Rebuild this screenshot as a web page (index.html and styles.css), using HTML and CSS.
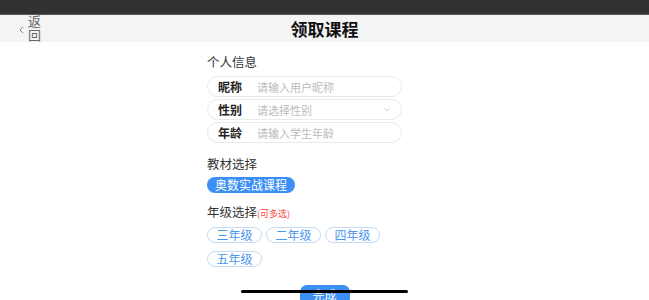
FILE: index.html
```html
<!DOCTYPE html>
<html lang="zh">
<head>
<meta charset="utf-8">
<link rel="stylesheet" href="styles.css">
</head>
<body>
<div class="status"></div>
<header class="nav">
  <div class="back">
    <svg class="chev" width="5" height="8" viewBox="0 0 5 8"><path d="M4 0.8 L1 4 L4 7.2" fill="none" stroke="#777" stroke-width="0.9"/></svg>
    <span class="back-text">返回</span>
  </div>
  <h1 class="title">领取课程</h1>
</header>
<main class="content">
  <div class="sec-title">个人信息</div>
  <div class="field"><span class="label">昵称</span><span class="ph">请输入用户昵称</span></div>
  <div class="field"><span class="label">性别</span><span class="ph">请选择性别</span>
    <svg class="arrow" width="6" height="4" viewBox="0 0 6 4"><path d="M0.5 0.5 L3 3 L5.5 0.5" fill="none" stroke="#bbb" stroke-width="0.8"/></svg>
  </div>
  <div class="field"><span class="label">年龄</span><span class="ph">请输入学生年龄</span></div>

  <div class="sec-title sec-gap">教材选择</div>
  <div class="chips"><span class="chip solid">奥数实战课程</span></div>

  <div class="sec-title sec-gap">年级选择<span class="note">(可多选)</span></div>
  <div class="grades">
    <span class="chip outline">三年级</span>
    <span class="chip outline">二年级</span>
    <span class="chip outline">四年级</span>
    <span class="chip outline">五年级</span>
  </div>
</main>
<div class="submit-wrap"><span class="submit">完成</span></div>
<div class="home-bar"></div>
</body>
</html>
```
FILE: styles.css
```css
html, body {
  margin: 0;
  padding: 0;
  background: #fff;
  font-family: "Noto Sans CJK SC", "Noto Sans", sans-serif;
  height: 300px;
  overflow: hidden;
}
.status {
  height: 14px;
  background: #323232;
  border-bottom: 1px solid #5c5c5c;
}
.nav {
  height: 27px;
  background: #f4f4f4;
  display: flex;
  align-items: center;
  justify-content: center;
  position: relative;
}
.back {
  position: absolute;
  left: 19px;
  top: 0;
  display: flex;
  align-items: center;
  height: 27px;
  color: #666;
}
.chev {
  margin-right: 3px;
  margin-top: 2px;
}
.back-text {
  writing-mode: vertical-rl;
  text-orientation: upright;
  white-space: nowrap;
  height: 28px;
  font-size: 13px;
  letter-spacing: 1px;
  line-height: 14px;
  color: #666;
  margin-top: 1px;
}
.title {
  margin: 0;
  font-size: 17px;
  font-weight: bold;
  color: #111;
  line-height: 27px;
}
.content {
  margin-left: 207px;
  width: 195px;
  padding-top: 12px;
  display: flex;
  flex-direction: column;
}
.sec-title {
  font-size: 12.5px;
  color: #333;
  line-height: 16px;
  margin-bottom: 6px;
}
.sec-gap { margin-top: 11px; margin-bottom: 5px; }
.note {
  font-size: 9px;
  color: #f44;
}
.field {
  height: 19px;
  border: 1px solid #eaeaea;
  border-radius: 11px;
  display: flex;
  align-items: center;
  padding-left: 10px;
  margin-bottom: 2px;
  position: relative;
}
.label {
  font-size: 12px;
  font-weight: bold;
  color: #222;
  width: 39px;
}
.ph {
  font-size: 11px;
  color: #bbb;
}
.arrow {
  position: absolute;
  right: 11px;
  top: 8px;
}
.chips { display: flex; }
.chip {
  height: 16px;
  border-radius: 9px;
  font-size: 12px;
  line-height: 16px;
  display: inline-flex;
  align-items: center;
  justify-content: center;
  box-sizing: border-box;
}
.chip.solid {
  background: #3b8ff5;
  color: #fff;
  width: 88px;
}
.grades {
  display: flex;
  flex-wrap: wrap;
  gap: 8px 4px;
}
.chip.outline {
  width: 55px;
  border: 1px solid #c3dcf6;
  color: #4a97ee;
  background: #fff;
}
.submit-wrap {
  display: flex;
  justify-content: center;
  margin-top: 18px;
}
.submit {
  width: 50px;
  height: 20px;
  border-radius: 7px;
  background: #3b8ff5;
  color: #fff;
  font-size: 12px;
  text-align: center;
  line-height: 20px;
}
.home-bar {
  position: absolute;
  left: 241px;
  top: 290px;
  width: 167px;
  height: 3px;
  border-radius: 2px;
  background: #000;
}
```
